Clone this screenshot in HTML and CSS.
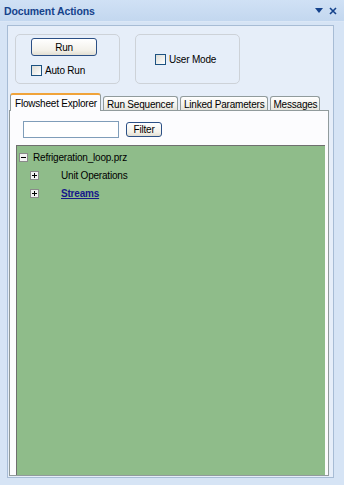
FILE: index.html
```html
<!DOCTYPE html>
<html>
<head>
<meta charset="utf-8">
<title>Document Actions</title>
<link rel="stylesheet" href="styles.css">
</head>
<body>
<div class="titlebar">
  <span class="title">Document Actions</span>
  <span class="controls">
    <svg class="ctl-drop" width="8" height="5" viewBox="0 0 8 5"><path d="M0 0h8L4 5z" fill="#15428b"/></svg>
    <svg class="ctl-close" width="8" height="8" viewBox="0 0 8 8"><path d="M1 1l6 6M7 1L1 7" stroke="#15428b" stroke-width="1.6"/></svg>
  </span>
</div>
<div class="panel">
  <div class="groups">
    <div class="group group-run">
      <button class="btn btn-run">Run</button>
      <label class="check"><span class="box"></span>Auto Run</label>
    </div>
    <div class="group group-mode">
      <label class="check"><span class="box"></span>User Mode</label>
    </div>
  </div>
  <div class="tabs">
    <div class="tabstrip">
      <div class="tab active">Flowsheet Explorer</div>
      <div class="tab">Run Sequencer</div>
      <div class="tab">Linked Parameters</div>
      <div class="tab tab-last">Messages</div>
    </div>
    <div class="tabpage">
      <div class="filter-row">
        <input class="filter-input" type="text">
        <button class="btn btn-filter">Filter</button>
      </div>
      <div class="tree">
        <div class="node root">
          <svg class="toggle" width="9" height="9" viewBox="0 0 9 9"><rect x="0.5" y="0.5" width="8" height="8" fill="#f2f2f2" stroke="#8a8a8a"/><path d="M2 4.5h5" stroke="#000"/></svg>
          <span class="label">Refrigeration_loop.prz</span>
        </div>
        <div class="node child">
          <svg class="toggle" width="9" height="9" viewBox="0 0 9 9"><rect x="0.5" y="0.5" width="8" height="8" fill="#f2f2f2" stroke="#8a8a8a"/><path d="M2 4.5h5M4.5 2v5" stroke="#000"/></svg>
          <span class="label">Unit Operations</span>
        </div>
        <div class="node child">
          <svg class="toggle" width="9" height="9" viewBox="0 0 9 9"><rect x="0.5" y="0.5" width="8" height="8" fill="#f2f2f2" stroke="#8a8a8a"/><path d="M2 4.5h5M4.5 2v5" stroke="#000"/></svg>
          <span class="label link">Streams</span>
        </div>
      </div>
    </div>
  </div>
</div>
</body>
</html>
```
FILE: styles.css
```css
html, body {
  margin: 0;
  padding: 0;
}
body {
  width: 344px;
  height: 485px;
  overflow: hidden;
  background: #d6e4f5;
  font-family: "Liberation Sans", Arial, sans-serif;
  font-size: 10px;
  letter-spacing: -0.2px;
  color: #000;
}
.titlebar {
  height: 22px;
  box-sizing: border-box;
  display: flex;
  align-items: center;
  justify-content: space-between;
  padding: 0 7px 0 4px;
  background: linear-gradient(#d0e1f5, #c3d7ef);
  border-bottom: 1px solid #dbe7f6;
  color: #15428b;
}
.title {
  font-weight: bold;
  font-size: 10.5px;
  letter-spacing: -0.1px;
}
.controls {
  display: flex;
  align-items: center;
  gap: 6px;
}
.panel {
  margin: 3px 10px 7px 7px;
  height: 453px;
  box-sizing: border-box;
  border: 1px solid #a7bcd5;
  background: #e6eef9;
  display: flex;
  flex-direction: column;
}
.groups {
  display: flex;
  gap: 15px;
  padding: 8px 0 0 7px;
}
.group {
  width: 105px;
  height: 50px;
  box-sizing: border-box;
  border: 1px solid #cdd2d8;
  border-radius: 5px;
}
.group-run {
  display: flex;
  flex-direction: column;
  align-items: flex-start;
  padding: 3px 0 0 15px;
}
.group-mode {
  display: flex;
  align-items: center;
  padding: 0 0 0 19px;
}
.btn {
  font-family: inherit;
  font-size: 10px;
  letter-spacing: -0.2px;
  color: #000;
  padding: 0;
  border: 1px solid #2b4f85;
  border-radius: 3px;
  background: linear-gradient(#ffffff, #f3f1ea 70%, #e2ded2);
  box-sizing: border-box;
}
.btn-run {
  width: 66px;
  height: 18px;
}
.check {
  display: flex;
  align-items: center;
  gap: 3px;
}
.group-run .check {
  margin-top: 9px;
}
.box {
  width: 11px;
  height: 11px;
  box-sizing: border-box;
  border: 1px solid #1d5281;
  background: linear-gradient(135deg, #dcdcd6, #ffffff);
}
.tabs {
  flex: 1;
  margin: 9px 4px 1px 1px;
  display: flex;
  flex-direction: column;
}
.tabstrip {
  display: flex;
  align-items: flex-end;
  height: 18px;
  padding-left: 1px;
  margin-bottom: -1px;
}
.tab {
  height: 15px;
  box-sizing: border-box;
  padding: 2px 3px 0 3px;
  margin-left: 2px;
  border: 1px solid #919b9c;
  border-bottom: none;
  border-radius: 3px 3px 0 0;
  background: linear-gradient(#ffffff, #f1f0ea 60%, #e3e1d8);
  white-space: nowrap;
}
.tab-last {
  padding: 2px 2px 0 2px;
}
.tab.active {
  height: 18px;
  margin-left: 0;
  padding: 3px 3px 0 4px;
  border-top: 2px solid #f0a33a;
  background: #fcfcfe;
  position: relative;
  z-index: 1;
}
.tabpage {
  flex: 1;
  border: 1px solid #919b9c;
  background: #fcfcfe;
  padding: 10px 3px 0 6px;
  display: flex;
  flex-direction: column;
}
.filter-row {
  display: flex;
  align-items: center;
  margin-left: 7px;
  height: 17px;
}
.filter-input {
  width: 96px;
  height: 17px;
  box-sizing: border-box;
  border: 1px solid #7f9db9;
  background: #fff;
  margin: 0;
  padding: 0;
}
.btn-filter {
  width: 36px;
  height: 15px;
  margin-left: 7px;
}
.tree {
  flex: 1;
  margin-top: 7px;
  background: #8fbc8a;
  border-top: 1px solid #6f6f6f;
  border-left: 1px solid #6f6f6f;
  padding: 2px 0 0 2px;
}
.node {
  height: 18px;
  display: flex;
  align-items: center;
}
.root .toggle {
  margin-right: 5px;
}
.child {
  padding-left: 11px;
}
.child .toggle {
  margin-right: 22px;
}
.label {
  white-space: nowrap;
}
.link {
  font-weight: bold;
  text-decoration: underline;
  color: #16168a;
}
```
